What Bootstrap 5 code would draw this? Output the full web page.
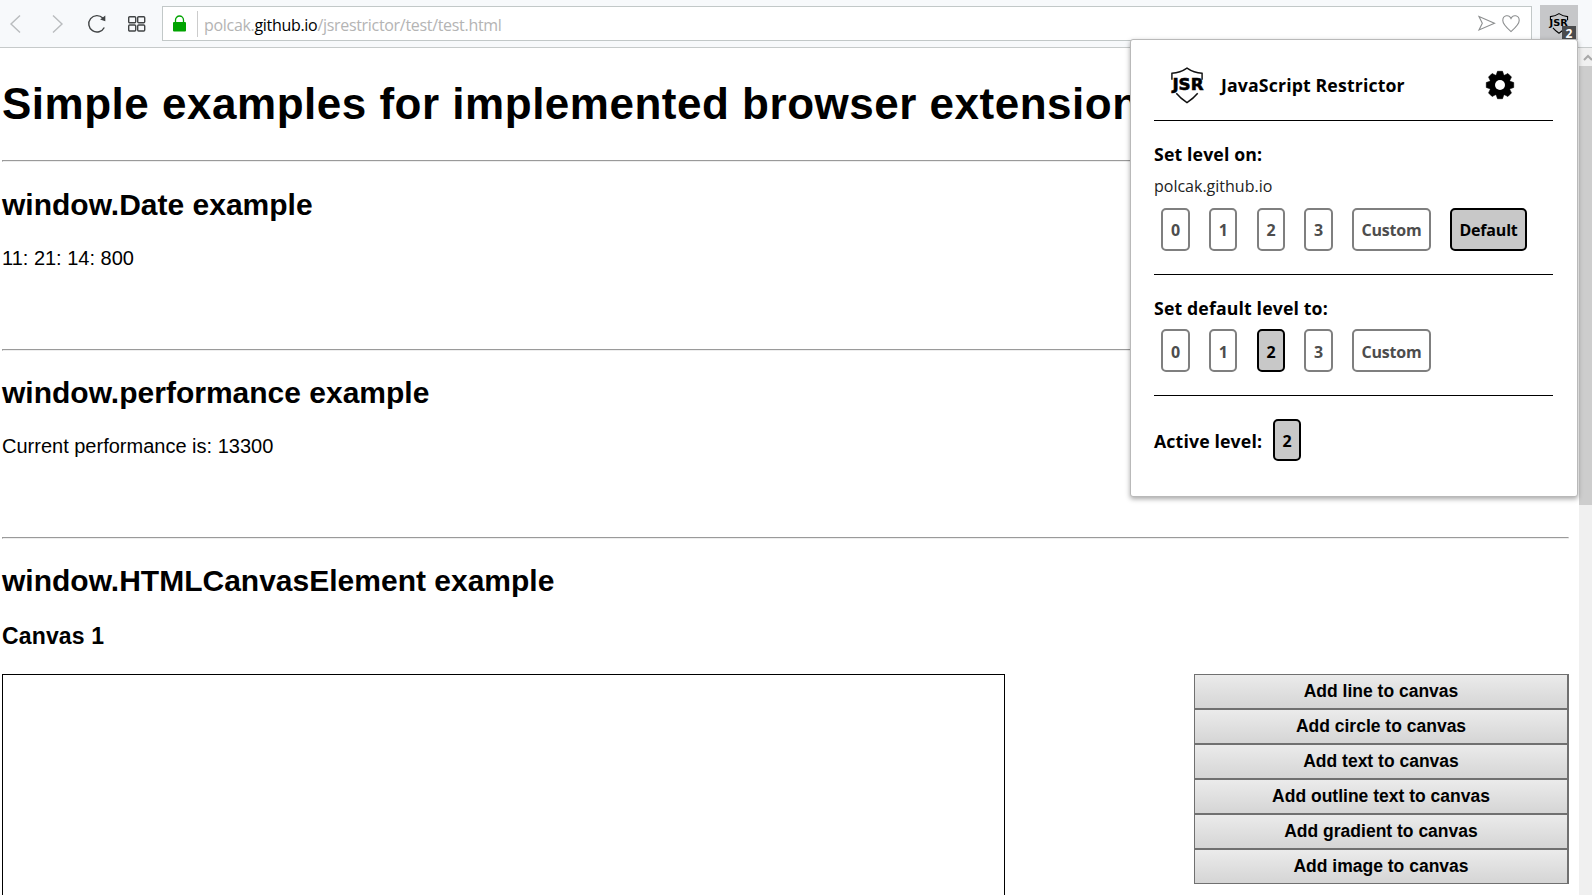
<!DOCTYPE html>
<html lang="en">
<head>
<meta charset="utf-8">
<title>JavaScript Restrictor test page</title>
<link href="https://cdn.jsdelivr.net/npm/bootstrap@5.3.0/dist/css/bootstrap.min.css" rel="stylesheet">
<style>
html,body{height:100%;overflow:hidden}
body{font-family:"Liberation Sans",Arial,sans-serif;font-size:20px;line-height:24px;color:#000;background:#fff}
.toolbar{height:48px;background:#f7f9fb;border-bottom:1px solid #c6caca}
.toolbar svg,.popup svg,.scroll svg{display:block;flex:none;overflow:visible}
.tools{width:162px;padding-left:10px}
.address{width:1370px;height:35px;margin-top:6px;border:1px solid #c2c8c8;background:#fff}
.lock{margin:0 11px 0 10px}
.divider{width:1px;height:26px;background:#ccc}
.url{font-family:"Open Sans",sans-serif;font-size:16px;line-height:22px;color:#b4b4b4;margin:2px 0 0 6px;letter-spacing:-.31px;white-space:nowrap}
.url b{font-weight:400;color:#000}
.ext{width:38px;height:35px;margin:5px 0 0 8px;background:#c6c7c9;padding:8px 0 0 9px}
.count{right:2px;bottom:0;width:14px;height:14px;background:#4a4b4d;color:#fff;font:700 12px/15px "Open Sans",sans-serif;text-align:center}
.view{height:847px}
.page-body{width:1567px;margin-left:2px}
h1,h2,h3{font-weight:700;margin:0;white-space:nowrap}
h1{font-size:44px;line-height:50px;padding:31px 0;letter-spacing:.51px}
h2{font-size:30px;line-height:34px;margin:25px 0 24px}
h1+hr+h2{margin-top:26px}
h3{font-size:23px;line-height:28px;margin-bottom:24px;letter-spacing:.15px}
.page-body p{margin:0 0 79px}
.page-body hr{margin:0;height:2px;border:1px solid;border-color:#9a9a9a #eee #eee #9a9a9a;opacity:1}
.drawing{width:1003px;height:221px;border:1px solid #000;border-bottom:0}
.actions{width:375px}
.act{height:35px;border:1px solid #707070;border-right-width:2px;background:linear-gradient(#ebebeb,#d5d5d5);color:#000;font:700 17.5px/33px "Liberation Sans",sans-serif;padding:0}
.scroll{width:13px;background:#f0f0f0}
.scroll-up{height:18px;padding:6px 0 0 5px}
.thumb{height:439px;background:#cdcdcd}
.popup{left:1130px;top:39px;width:448px;height:458px;background:#fff;border:1px solid #b9b9b9;border-radius:3px;box-shadow:0 2px 5px rgba(0,0,0,.35);padding:0 24px 0 23px;font-family:"Open Sans",sans-serif}
.popup-head{height:81px;border-bottom:1px solid #000;padding-left:16px}
.title{font-size:17.7px;line-height:24px;font-weight:700;white-space:nowrap;letter-spacing:.14px}
.level-box{border-bottom:1px solid #000}
.host{font-size:16px;line-height:22px;color:#222}
.lv{height:43px;border:2px solid #7f7f7f;border-radius:5px;background:#fff;color:#4d4d4d;font:700 16px/41px "Open Sans",sans-serif;padding:0;width:28.6px;text-align:center;letter-spacing:-.2px}
.lv.low{line-height:39px;padding-top:2px}
.lv.wide{width:79px}.lv.def{width:77px}
.lv.on{border-color:#000;background:#c8c8c8;color:#000}
.levels{gap:19.1px;padding-left:7.2px}
</style>
</head>
<body>
<header class="toolbar d-flex align-items-start">
  <div class="tools d-flex align-items-center h-100">
    <svg width="11" height="18" viewBox="0 0 11 18" fill="none" stroke="#b9bcbe" stroke-width="1.4"><path d="M10 .5 1 9l9 8.500"/></svg>
    <svg style="margin-left:31px" width="11" height="18" viewBox="0 0 11 18" fill="none" stroke="#b9bcbe" stroke-width="1.4"><path d="m1 .5 9 8.500-9 8.500"/></svg>
    <svg style="margin-left:24px" width="20" height="20" viewBox="0 0 20 20" fill="none" stroke="#414445" stroke-width="1.4"><path d="M17.300 13.500A8.200 8.200 0 1 1 15.800 4"/><path d="M18.300 1.500v5.700l-5.200-1.600z" fill="#414445" stroke="none"/></svg>
    <svg style="margin-left:20.500px" width="18" height="16" viewBox="0 0 18 16" fill="none" stroke="#414445" stroke-width="1.4"><rect x=".7" y=".7" width="7" height="6" rx="1"/><rect x="9.700" y=".7" width="7" height="6" rx="1"/><rect x=".7" y="9" width="7" height="6" rx="1"/><rect x="9.700" y="9" width="7" height="6" rx="1"/></svg>
  </div>
  <div class="address d-flex align-items-center">
    <svg class="lock" width="13" height="17" viewBox="0 0 13 17"><path d="M2.500 7V5a4 4 0 0 1 8 0v2" fill="none" stroke="#00a300" stroke-width="1.300"/><rect y="7" width="13" height="9.500" rx="1" fill="#00a300"/></svg>
    <span class="divider"></span>
    <span class="url">polcak.<b>github.io</b>/jsrestrictor/test/test.html</span>
    <svg class="ms-auto" width="17" height="15" viewBox="0 0 17 15" fill="none" stroke="#8d8f90" stroke-width="1.1"><path d="M1 .6 16.500 7.200 1 14 4.300 7.200z"/></svg>
    <svg style="margin:0 11px 0 7px" width="18" height="17" viewBox="0 0 18 17" fill="none" stroke="#8d8f90" stroke-width="1.1"><path d="M9 16.500C5 13 .8 9.500.8 5.500.8.200 7-1 9 3.500c2-4.500 8.200-3.300 8.200 2 0 4-4.200 7.500-8.200 11z"/></svg>
  </div>
  <div class="ext position-relative">
    <svg width="20" height="21" viewBox="0 0 34 38"><g fill="none" stroke="#000" stroke-width="2"><path d="M1.500 13V6.500Q10 6 17 1.200 24 6 32.500 6.500V13M6 27Q10 32 17 36.500 24 32 28 27"/></g><text transform="translate(0 24)" font-family="DejaVu Sans" font-weight="700" font-size="17" textLength="33" lengthAdjust="spacingAndGlyphs">JSR</text></svg>
    <span class="count position-absolute">2</span>
  </div>
</header>
<div class="view d-flex justify-content-between">
  <main class="page-body">
    <h1>Simple examples for implemented browser extension</h1>
    <hr>
    <h2>window.Date example</h2>
    <p>11: 21: 14: 800</p>
    <hr>
    <h2>window.performance example</h2>
    <p>Current performance is: 13300</p>
    <hr>
    <h2>window.HTMLCanvasElement example</h2>
    <h3>Canvas 1</h3>
    <div class="d-flex justify-content-between align-items-start">
      <div class="drawing"></div>
      <div class="actions d-flex flex-column">
        <button class="act">Add line to canvas</button>
        <button class="act">Add circle to canvas</button>
        <button class="act">Add text to canvas</button>
        <button class="act">Add outline text to canvas</button>
        <button class="act">Add gradient to canvas</button>
        <button class="act">Add image to canvas</button>
      </div>
    </div>
  </main>
  <aside class="scroll">
    <div class="scroll-up"><svg width="8" height="7" viewBox="0 0 8 7" fill="none" stroke="#a9a9a9" stroke-width="2"><path d="m0 6 4-4 4 4"/></svg></div>
    <div class="thumb"></div>
  </aside>
</div>
<section class="popup position-absolute">
  <div class="popup-head d-flex align-items-center">
    <svg style="margin-top:10px" width="34" height="37" viewBox="0 0 34 38"><g fill="none" stroke="#111" stroke-width="1.500"><path d="M1.500 13V6.500Q10 6 17 1.200 24 6 32.500 6.500V13M6 27Q10 32 17 36.500 24 32 28 27"/></g><text transform="translate(2 24)" font-family="DejaVu Sans" font-weight="700" font-size="17" stroke="#000" stroke-width=".6" textLength="32" lengthAdjust="spacingAndGlyphs">JSR</text></svg>
    <span class="title" style="margin:10px 0 0 17px">JavaScript Restrictor</span>
    <svg class="ms-auto" style="margin:10px 39px 0 0" width="28" height="28" viewBox="-14 -14 28 28"><path d="M-2.500-13.700h5l1.500 4.500h-8zM-2.500 13.700h5l1.500-4.500h-8z" id="teeth" stroke="#000" stroke-linejoin="round" stroke-width=".6"/><use href="#teeth" transform="rotate(45)"/><use href="#teeth" transform="rotate(90)"/><use href="#teeth" transform="rotate(135)"/><circle r="10.600"/><circle r="5" fill="#fff"/></svg>
  </div>
  <div class="level-box" style="height:154px;padding-top:21px">
    <div class="title">Set level on:</div>
    <div class="host" style="margin:9px 0 11px">polcak.github.io</div>
    <div class="levels d-flex">
      <button class="lv">0</button><button class="lv">1</button><button class="lv">2</button><button class="lv">3</button><button class="lv wide">Custom</button><button class="lv def on">Default</button>
    </div>
  </div>
  <div class="level-box" style="height:121px;padding-top:21px">
    <div class="title" style="margin-bottom:9px">Set default level to:</div>
    <div class="levels d-flex">
      <button class="lv low">0</button><button class="lv low">1</button><button class="lv low on">2</button><button class="lv low">3</button><button class="lv low wide">Custom</button>
    </div>
  </div>
  <div class="d-flex align-items-center" style="padding-top:23px">
    <span class="title" style="padding-top:2px">Active level:</span><button class="lv on" style="margin-left:10.500px;height:42px">2</button>
  </div>
</section>
<script src="https://cdn.jsdelivr.net/npm/bootstrap@5.3.0/dist/js/bootstrap.bundle.min.js"></script>
</body>
</html>
